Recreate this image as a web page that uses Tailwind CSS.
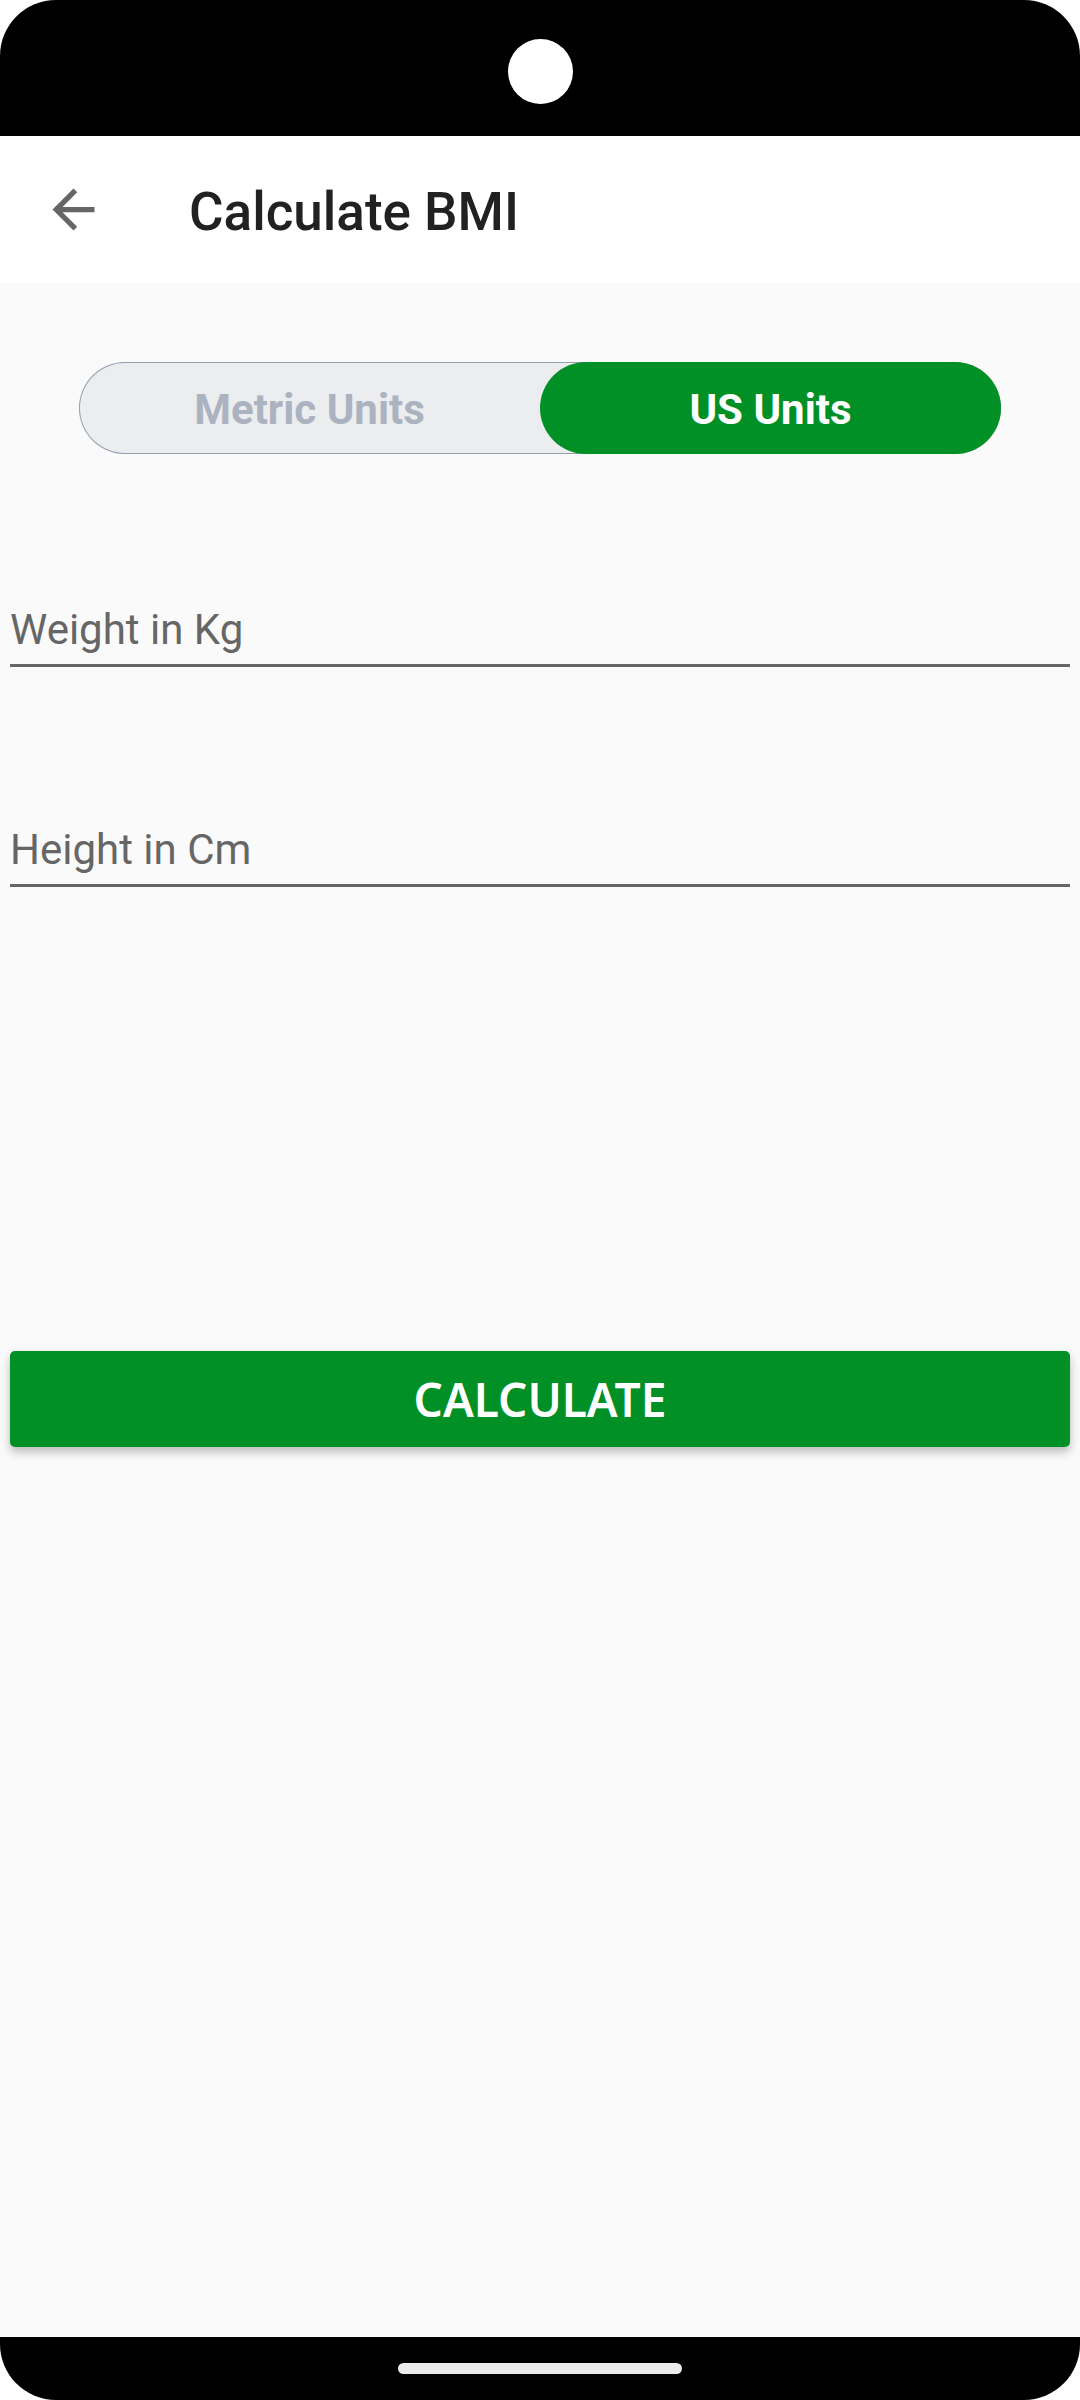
<!DOCTYPE html>
<html lang="en">
<head>
<meta charset="utf-8">
<meta name="viewport" content="width=device-width, initial-scale=1">
<title>Calculate BMI</title>
<script src="https://cdn.jsdelivr.net/npm/@tailwindcss/browser@4"></script>
</head>
<body class="bg-white font-[Roboto,sans-serif]">
<div class="flex min-h-screen flex-col overflow-hidden rounded-[56px] bg-[#fafafa]">
  <div class="flex h-[136px] justify-center bg-black pt-[39px]">
    <div class="size-[65px] rounded-full bg-white"></div>
  </div>
  <header class="flex h-[147px] items-center bg-white pl-[42px]">
    <button type="button" aria-label="Back" class="size-[63px]">
      <svg viewBox="0 0 24 24" class="size-full" fill="#666666" aria-hidden="true"><path d="M20 11H7.83l5.59-5.59L12 4l-8 8 8 8 1.41-1.41L7.83 13H20v-2z"/></svg>
    </button>
    <h1 class="ml-[84px] pt-1 text-[53px] leading-[62px] font-medium text-[#212121]">Calculate BMI</h1>
  </header>
  <main class="flex grow flex-col">
    <div class="mx-[79px] mt-[79px] grid h-[92px] grid-cols-2 rounded-full bg-[#ebedef] text-[42px] leading-[50px] font-bold inset-ring inset-ring-[#949eae]" role="group" aria-label="Units">
      <button type="button" aria-pressed="false" class="rounded-full pt-1 text-[#acb3c0]">Metric Units</button>
      <button type="button" aria-pressed="true" class="rounded-full bg-[#009025] pt-1 text-white">US Units</button>
    </div>
    <form class="flex flex-col px-[10px] pt-[131px]">
      <input type="text" inputmode="decimal" aria-label="Weight in Kg" placeholder="Weight in Kg" class="h-[82px] border-b-3 border-[#666666] pt-[10px] text-[42px] leading-[50px] text-[#212121] outline-none placeholder:text-[#666666]">
      <input type="text" inputmode="decimal" aria-label="Height in Cm" placeholder="Height in Cm" class="mt-[138px] h-[82px] border-b-3 border-[#666666] pt-[10px] text-[42px] leading-[50px] text-[#212121] outline-none placeholder:text-[#666666]">
      <button type="submit" class="mt-[464px] h-24 rounded-[5px] bg-[#009025] font-['Noto_Sans',sans-serif] text-[46px] leading-[60px] font-semibold text-white shadow-[0_5px_10px_rgba(0,0,0,0.25)]">CALCULATE</button>
    </form>
  </main>
  <footer class="flex h-[63px] items-center justify-center bg-black">
    <div class="h-[11px] w-[284px] rounded-full bg-[#ebebeb]"></div>
  </footer>
</div>
</body>
</html>
